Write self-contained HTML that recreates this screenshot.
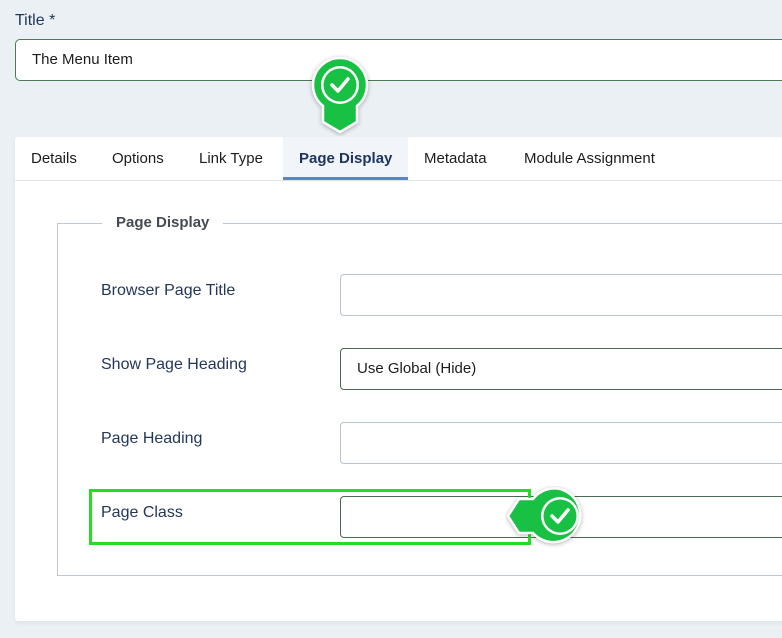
<!DOCTYPE html>
<html><head><style>
body{margin:0;width:782px;height:638px;background:#ebf0f5;font-family:"Liberation Sans",sans-serif;position:relative;overflow:hidden;color:#22375a}
.a{position:absolute}
.inp{position:absolute;left:340px;width:460px;height:40px;background:#fff;border:1px solid #b9c4d0;border-radius:4px;box-sizing:border-box}
.lbl{position:absolute;left:101px;font-size:16px;color:#22375a}
.tab{position:absolute;top:150px;font-size:15px;color:#1c1c1c}
</style></head><body>
<div class="a" style="left:15px;top:12px;font-size:16px;color:#22375a">Title *</div>
<div class="a" style="left:15px;top:39px;width:790px;height:42px;border:1px solid #4b7a55;border-radius:5px;background:#fff;box-sizing:border-box"></div>
<div class="a" style="left:32px;top:51px;font-size:15px;color:#1c1c1c">The Menu Item</div>

<div class="a" style="left:15px;top:137px;width:780px;height:484px;background:#fff;border-radius:3px;box-shadow:0 2px 4px rgba(0,0,0,.06)"></div>
<div class="a" style="left:15px;top:180px;width:780px;height:1px;background:#dfe3e8"></div>
<div class="a" style="left:283px;top:137px;width:125px;height:43px;background:#f1f5f9"></div>
<div class="a" style="left:283px;top:177px;width:125px;height:3px;background:#5a85c0"></div>
<div class="tab" style="left:31px">Details</div>
<div class="tab" style="left:112px">Options</div>
<div class="tab" style="left:199px">Link Type</div>
<div class="tab" style="left:299px;font-weight:bold;color:#1e3560">Page Display</div>
<div class="tab" style="left:424px">Metadata</div>
<div class="tab" style="left:524px">Module Assignment</div>

<div class="a" style="left:57px;top:223px;width:760px;height:353px;border:1px solid #c0c7ce;box-sizing:border-box"></div>
<div class="a" style="left:102px;top:214px;padding:0 14px;background:#fff;font-size:15px;font-weight:bold;color:#444b52">Page Display</div>

<div class="lbl" style="top:282px">Browser Page Title</div>
<div class="inp" style="top:274px;height:42px"></div>
<div class="lbl" style="top:356px">Show Page Heading</div>
<div class="inp" style="top:348px;height:42px;border-color:#4b6b55"></div>
<div class="a" style="left:357px;top:360px;font-size:15px;color:#1c1c1c">Use Global (Hide)</div>
<div class="lbl" style="top:430px">Page Heading</div>
<div class="inp" style="top:422px;height:42px"></div>
<div class="lbl" style="top:504px">Page Class</div>
<div class="inp" style="top:496px;height:42px;border-color:#4b6b55"></div>
<div class="a" style="left:89px;top:489px;width:442px;height:56px;border:3px solid #22dd22;box-sizing:border-box"></div>

<svg class="a" style="left:300px;top:52px" width="80" height="84" viewBox="0 0 80 84">
<path d="M40 6 A27 27 0 0 1 57 54 L57 70 L40 80 L23 70 L23 54 A27 27 0 0 1 40 6Z" fill="#18c043" stroke="#fff" stroke-width="2.5" filter="drop-shadow(0 1px 2px rgba(0,0,0,.3))"/>
<circle cx="40" cy="33" r="19" fill="#fff"/><circle cx="40" cy="33" r="16.5" fill="#18c043"/>
<path d="M32 33 L38 39 L48 27" fill="none" stroke="#fff" stroke-width="3.5" stroke-linecap="round" stroke-linejoin="round"/>
</svg>
<svg class="a" style="left:505px;top:486px" width="82" height="62" viewBox="0 0 82 62">
<path d="M55 3 A27 27 0 1 1 28 47 L14 47 L3 30 L14 13 L28 13 A27 27 0 0 1 55 3Z" fill="#18c043" stroke="#fff" stroke-width="2.5" filter="drop-shadow(0 1px 2px rgba(0,0,0,.3))"/>
<circle cx="55" cy="30" r="19" fill="#fff"/><circle cx="55" cy="30" r="16.5" fill="#18c043"/>
<path d="M47 30 L53 36 L63 24" fill="none" stroke="#fff" stroke-width="3.5" stroke-linecap="round" stroke-linejoin="round"/>
</svg>
</body></html>
